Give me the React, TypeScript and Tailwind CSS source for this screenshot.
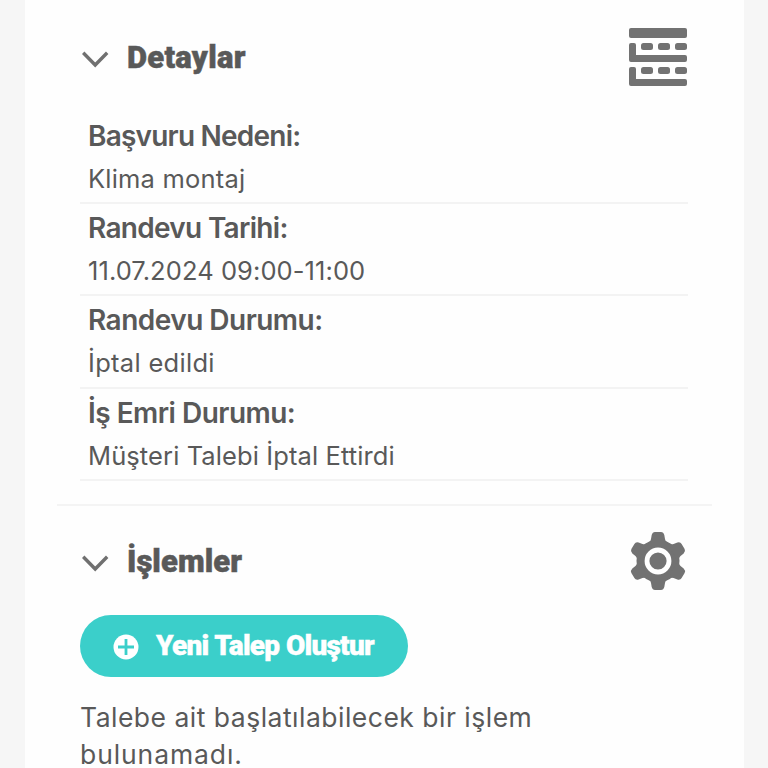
import type { ReactNode } from "react";

const details = [
  { label: "Başvuru Nedeni:", value: "Klima montaj", labelClass: "tracking-[-0.78px]", valueClass: "tracking-[0.2px]" },
  { label: "Randevu Tarihi:", value: "11.07.2024 09:00-11:00", labelClass: "tracking-[-0.7px]", valueClass: "tracking-[0.08px]" },
  { label: "Randevu Durumu:", value: "İptal edildi", labelClass: "tracking-[-0.52px]", valueClass: "tracking-[0.3px]" },
  { label: "İş Emri Durumu:", value: "Müşteri Talebi İptal Ettirdi", labelClass: "tracking-[-0.52px]", valueClass: "tracking-[0.1px]" },
];

function Chevron() {
  return (
    <svg width="28" height="18" viewBox="0 0 28 18" fill="none" stroke="#707070" strokeWidth="3.4">
      <path d="M1.2 2.8 L13.2 15 L25.2 2.8" />
    </svg>
  );
}

function ListIcon() {
  return (
    <svg width="58" height="58" viewBox="0 0 58 58" fill="#727272">
      <rect width="58" height="10" rx="2" />
      <path d="M2 15H5Q7 15 7 17V27H56Q58 27 58 29V32Q58 34 56 34H2Q0 34 0 32V17Q0 15 2 15Z" />
      <path d="M2 39H5Q7 39 7 41V51H56Q58 51 58 53V56Q58 58 56 58H2Q0 58 0 56V41Q0 39 2 39Z" />
      <rect x="12" y="15" width="12" height="7" rx="2.5" />
      <rect x="29" y="15" width="12" height="7" rx="2.5" />
      <rect x="46" y="15" width="12" height="7" rx="2.5" />
      <rect x="12" y="39" width="12" height="7" rx="2.5" />
      <rect x="29" y="39" width="12" height="7" rx="2.5" />
      <rect x="46" y="39" width="12" height="7" rx="2.5" />
    </svg>
  );
}

function GearIcon() {
  const angles = [0, 60, 120, 180, 240, 300];
  return (
    <svg width="58" height="58" viewBox="-29 -29 58 58" fill="#727272">
      <circle r="21.5" />
      {angles.map((a) => (
        <path
          key={a}
          transform={`rotate(${a})`}
          d="M-11.5 -17Q-7.5 -19 -7 -22L-6.3 -26Q-5.5 -29 -3 -29H3Q5.5 -29 6.3 -26L7 -22Q7.5 -19 11.5 -17Z"
        />
      ))}
      <circle r="11" fill="none" stroke="#fff" strokeWidth="4.8" />
    </svg>
  );
}

function SectionHeader({ title, icon }: { title: ReactNode; icon: ReactNode }) {
  return (
    <div className="flex h-[60px] items-center pl-[57px] pr-[57px]">
      <div className="mt-1 w-[45px]">
        <Chevron />
      </div>
      <h2 className="flex-1 pt-0.5 text-[31px] leading-9 font-black font-[Roboto,sans-serif] [-webkit-text-stroke:0.5px_#595959]">
        {title}
      </h2>
      {icon}
    </div>
  );
}

export default function App() {
  return (
    <div className="h-[768px] overflow-hidden bg-[#f6f6f6] pl-[25px] pr-6 font-[Inter,sans-serif] text-[#595959]">
      <main className="h-full bg-[#fefefe] pt-[27px]">
        <SectionHeader title={<span className="tracking-[0.25px]">Detaylar</span>} icon={<ListIcon />} />

        <dl className="mt-[24.5px] mr-[56px] ml-[55px]">
          {details.map((d) => (
            <div key={d.label} className="h-[92.4px] border-b-2 border-[#f3f3f3] pl-2 whitespace-nowrap">
              <dt className="pt-[5px] text-[28px] leading-[38px] font-semibold">
                <span className={d.labelClass}>{d.label}</span>
              </dt>
              <dd className="pt-[3px] text-[25.5px] leading-[42px]">
                <span className={d.valueClass}>{d.value}</span>
              </dd>
            </div>
          ))}
        </dl>

        <hr className="mx-8 mt-[22.6px] mb-[25px] border-t-2 border-[#f4f4f4]" />

        <SectionHeader title={<span className="tracking-[0.05px]">İşlemler</span>} icon={<GearIcon />} />

        <button className="mt-6 ml-[55px] flex h-[62px] w-[328px] items-center rounded-full bg-[#3bcfca] pl-[33px] text-white">
          <svg className="mt-0.5" width="26" height="26" viewBox="0 0 26 26">
            <circle cx="13" cy="13" r="12.5" fill="#fff" />
            <path d="M13 5V21M5 13H21" stroke="#3bcfca" strokeWidth="2.8" />
          </svg>
          <span className="ml-[17px] whitespace-nowrap text-[28px] font-black tracking-[-0.75px] [word-spacing:0.3px] font-[Roboto,sans-serif] [-webkit-text-stroke:0.4px_white]">
            Yeni Talep Oluştur
          </span>
        </button>

        <p className="mt-[22px] ml-[55px] whitespace-nowrap text-[26.5px] leading-[37px]">
          <span className="tracking-[0.49px]">Talebe ait başlatılabilecek bir işlem</span>
          <br />
          <span className="tracking-[0.9px]">bulunamadı.</span>
        </p>
      </main>
    </div>
  );
}
